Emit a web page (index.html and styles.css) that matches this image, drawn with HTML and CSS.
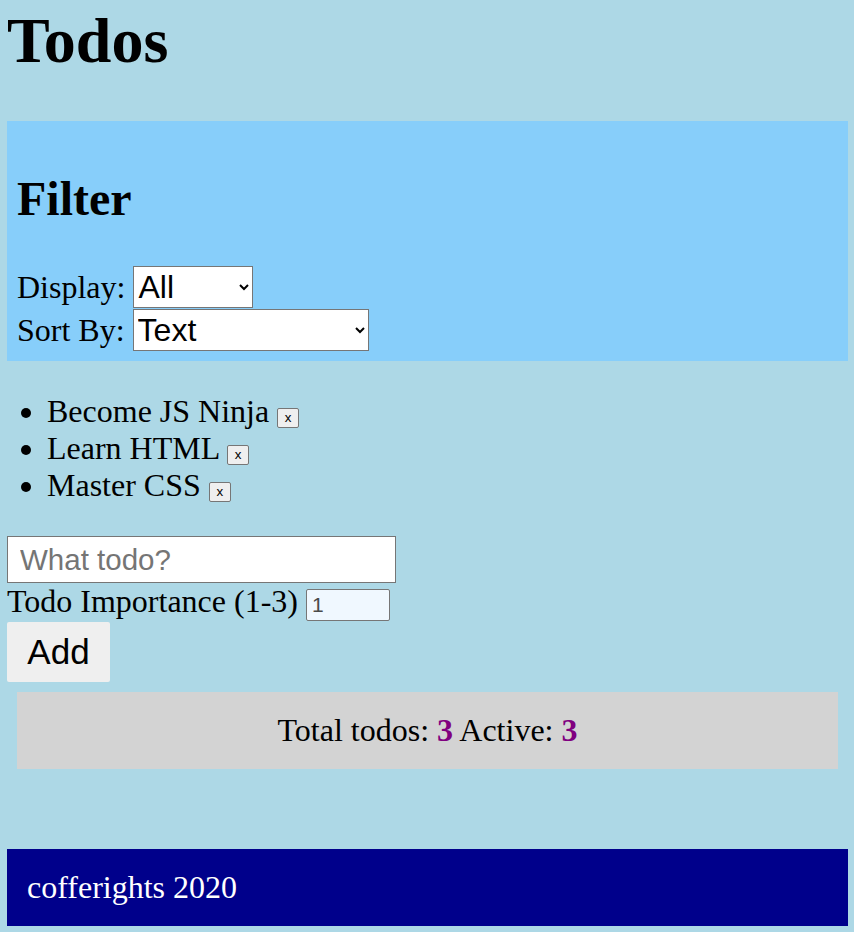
FILE: index.html
```html
<!DOCTYPE html>
<html lang="en">
<head>
<meta charset="utf-8">
<title>Todos</title>
<link rel="stylesheet" href="styles.css">
</head>
<body>
<h1 class="title">Todos</h1>
<section class="filter">
  <h2 class="filter-title">Filter</h2>
  <label class="filter-row">Display: <select class="select select-display"><option>All</option><option>Active</option><option>Done</option></select></label>
  <label class="filter-row">Sort By: <select class="select select-sort"><option>Text</option><option>Importance</option></select></label>
</section>
<ul class="todo-list">
  <li class="todo-item">Become JS Ninja <button class="remove-btn">x</button></li>
  <li class="todo-item">Learn HTML <button class="remove-btn">x</button></li>
  <li class="todo-item">Master CSS <button class="remove-btn">x</button></li>
</ul>
<form class="todo-form">
  <input class="todo-input" type="text" placeholder="What todo?">
  <div class="importance-row">Todo Importance (1-3) <input class="importance-input" type="text" inputmode="numeric" value="1"></div>
  <button class="add-btn" type="button">Add</button>
</form>
<div class="stats">Total todos: <b class="count">3</b> Active: <b class="count">3</b></div>
<footer class="footer">cofferights 2020</footer>
</body>
</html>
```

FILE: styles.css
```css
html {
  background: #add8e6;
}
body {
  margin: 7px 6px 7px 7px;
  font-family: "Liberation Serif", "Times New Roman", serif;
  font-size: 32px;
  color: #000;
}
.title {
  font-size: 64px;
  line-height: 68px;
  font-weight: bold;
  margin: 0 0 46px;
}
.filter {
  background: #87cefa;
  padding: 10px;
}
.filter-title {
  font-size: 48px;
  margin: 40px 0;
}
.filter-row {
  display: block;
  height: 42.5px;
}
.select {
  font-family: "Liberation Sans", Arial, sans-serif;
  font-size: 32px;
  height: 42px;
  background: #fff;
  color: #000;
  border: 1px solid #767676;
  border-radius: 0;
  vertical-align: baseline;
}
.select-display {
  width: 120px;
}
.select-sort {
  width: 236px;
}
.todo-list {
  margin: 32px 0;
  padding-left: 40px;
}
.remove-btn {
  box-sizing: border-box;
  width: 22px;
  height: 20px;
  font-family: "Liberation Sans", Arial, sans-serif;
  font-size: 13.33px;
  padding: 0;
  background: #efefef;
  border: 1px solid #767676;
  border-radius: 2px;
  color: #000;
}
.todo-form {
  margin: 0;
}
.todo-input {
  display: block;
  box-sizing: border-box;
  width: 389px;
  height: 47px;
  margin: 0;
  padding: 0 12px;
  font-family: "Liberation Sans", Arial, sans-serif;
  font-size: 29.5px;
  border: 1px solid #767676;
  background: #fff;
}
.todo-input::placeholder {
  color: #757575;
}
.importance-row {
  height: 39px;
}
.importance-input {
  box-sizing: border-box;
  width: 84px;
  height: 32px;
  padding: 0 5px;
  font-family: "Liberation Sans", Arial, sans-serif;
  font-size: 21px;
  color: #4a4a4a;
  background: #f0f8ff;
  border: 1px solid #767676;
  border-radius: 2px;
}
.add-btn {
  display: block;
  box-sizing: border-box;
  width: 103px;
  height: 60px;
  padding: 0;
  font-family: "Liberation Sans", Arial, sans-serif;
  font-size: 35px;
  color: #000;
  background: #efefef;
  border: none;
  border-radius: 2px;
}
.stats {
  margin: 10px;
  padding: 20px;
  background: #d3d3d3;
  text-align: center;
}
.count {
  color: #800080;
}
.footer {
  margin-top: 80px;
  padding: 20px;
  background: #00008b;
  color: #fff;
}
```
